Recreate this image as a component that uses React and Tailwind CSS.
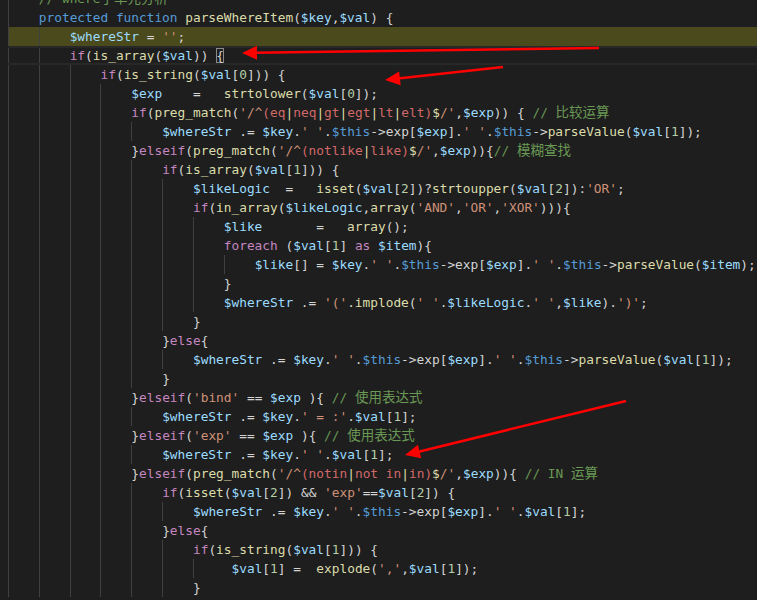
import React from "react";

// colours for each kind of token
const C = {
  kw: "text-[#569cd6]",
  ctl: "text-[#c586c0]",
  fn: "text-[#dcdcaa]",
  v: "text-[#9cdcfe]",
  s: "text-[#ce9178]",
  re: "text-[#d16969]",
  num: "text-[#b5cea8]",
  cm: "text-[#6a9955]",
  p: "text-[#d4d4d4]",
};

const LINES = [
  { ind: 1, src: "// where子单元分析" },
  { ind: 1, src: "protected function parseWhereItem($key,$val) {" },
  { ind: 2, src: "$whereStr = '';", hl: true },
  { ind: 2, src: "if(is_array($val)) {", cur: true },
  { ind: 3, src: "if(is_string($val[0])) {" },
  { ind: 4, src: "$exp    =   strtolower($val[0]);" },
  { ind: 4, src: "if(preg_match('/^(eq|neq|gt|egt|lt|elt)$/',$exp)) { // 比较运算" },
  { ind: 5, src: "$whereStr .= $key.' '.$this->exp[$exp].' '.$this->parseValue($val[1]);" },
  { ind: 4, src: "}elseif(preg_match('/^(notlike|like)$/',$exp)){// 模糊查找" },
  { ind: 5, src: "if(is_array($val[1])) {" },
  { ind: 6, src: "$likeLogic  =   isset($val[2])?strtoupper($val[2]):'OR';" },
  { ind: 6, src: "if(in_array($likeLogic,array('AND','OR','XOR'))){" },
  { ind: 7, src: "$like       =   array();" },
  { ind: 7, src: "foreach ($val[1] as $item){" },
  { ind: 8, src: "$like[] = $key.' '.$this->exp[$exp].' '.$this->parseValue($item);" },
  { ind: 7, src: "}" },
  { ind: 7, src: "$whereStr .= '('.implode(' '.$likeLogic.' ',$like).')';" },
  { ind: 6, src: "}" },
  { ind: 5, src: "}else{" },
  { ind: 6, src: "$whereStr .= $key.' '.$this->exp[$exp].' '.$this->parseValue($val[1]);" },
  { ind: 5, src: "}" },
  { ind: 4, src: "}elseif('bind' == $exp ){ // 使用表达式" },
  { ind: 5, src: "$whereStr .= $key.' = :'.$val[1];" },
  { ind: 4, src: "}elseif('exp' == $exp ){ // 使用表达式" },
  { ind: 5, src: "$whereStr .= $key.' '.$val[1];" },
  { ind: 4, src: "}elseif(preg_match('/^(notin|not in|in)$/',$exp)){ // IN 运算" },
  { ind: 5, src: "if(isset($val[2]) && 'exp'==$val[2]) {" },
  { ind: 6, src: "$whereStr .= $key.' '.$this->exp[$exp].' '.$val[1];" },
  { ind: 5, src: "}else{" },
  { ind: 6, src: "if(is_string($val[1])) {" },
  { ind: 7, src: " $val[1] =  explode(',',$val[1]);" },
  { ind: 6, src: "}" },
];

const TOKEN_RE =
  /(\/\/.*$)|('\/[^']*')|('[^']*')|(\$this\b)|(\$\w+)|\b(protected|function)\b|\b(if|elseif|else|foreach|as)\b|([A-Za-z_]\w*)(?=\()|(\d+)|([A-Za-z_]\w*)|(\s+)|(.)/g;

function Comment({ text }) {
  return text.split(/([\u4e00-\u9fff]+)/).map((part, i) =>
    /[\u4e00-\u9fff]/.test(part) ? (
      <span key={i} className="font-['Noto_Sans_CJK_SC',sans-serif] text-[13.5px] leading-none">
        {part}
      </span>
    ) : (
      <span key={i}>{part}</span>
    )
  );
}

function RegexStr({ text }) {
  const body = text.slice(2, -2);
  return (
    <>
      <span className={C.s}>'/</span>
      {body.split("").map((ch, i) => (
        <span key={i} className={ch === "|" || ch === "$" ? C.fn : ch === "^" ? C.s : C.re}>
          {ch}
        </span>
      ))}
      <span className={C.s}>/'</span>
    </>
  );
}

function Code({ src }) {
  const out = [];
  TOKEN_RE.lastIndex = 0;
  let m;
  let k = 0;
  while ((m = TOKEN_RE.exec(src))) {
    const t = m[0];
    k++;
    if (m[1]) out.push(<span key={k} className={C.cm}><Comment text={t} /></span>);
    else if (m[2]) out.push(<RegexStr key={k} text={t} />);
    else if (m[3]) out.push(<span key={k} className={C.s}>{t}</span>);
    else if (m[4]) out.push(<span key={k} className={C.kw}>{t}</span>);
    else if (m[5]) out.push(<span key={k} className={C.v}>{t}</span>);
    else if (m[6]) out.push(<span key={k} className={C.kw}>{t}</span>);
    else if (m[7]) out.push(<span key={k} className={C.ctl}>{t}</span>);
    else if (m[8]) out.push(<span key={k} className={C.fn}>{t}</span>);
    else if (m[9]) out.push(<span key={k} className={C.num}>{t}</span>);
    else out.push(<span key={k} className={C.p}>{t}</span>);
  }
  return out;
}

function Line({ line }) {
  const guides = Array.from({ length: line.ind });
  const src = line.cur ? line.src.slice(0, -1) : line.src;
  return (
    <div
      className={
        "flex h-[19px] shrink-0 items-center whitespace-pre " +
        (line.hl ? "bg-[#4b4a1c] " : "") +
        (line.cur ? "border-y-2 border-[#282828] " : "")
      }
    >
      {guides.map((_, i) => (
        <span key={i} className="self-stretch shrink-0 shadow-[inset_1px_0_0_#404040]">
          {"    "}
        </span>
      ))}
      <span className="leading-[19px]">
        <Code src={src} />
        {line.cur && (
          <span className="text-[#d4d4d4] shadow-[inset_0_0_0_1px_#8a8a8a]">{"{"}</span>
        )}
      </span>
    </div>
  );
}

function Arrow({ x1, y1, x2, y2 }) {
  const dx = x2 - x1;
  const dy = y2 - y1;
  const len = Math.hypot(dx, dy);
  const ux = dx / len;
  const uy = dy / len;
  const hl = 15;
  const hw = 7;
  const bx = x2 - ux * hl;
  const by = y2 - uy * hl;
  const pts = [
    [x2, y2],
    [bx - uy * hw, by + ux * hw],
    [bx + uy * hw, by - ux * hw],
  ]
    .map((p) => p.join(","))
    .join(" ");
  return (
    <g>
      <line x1={x1} y1={y1} x2={bx + ux * 2} y2={by + uy * 2} stroke="#ff0000" strokeWidth="2.5" />
      <polygon points={pts} fill="#ff0000" />
    </g>
  );
}

export default function App() {
  return (
    <div className="relative h-[600px] w-[757px] overflow-hidden bg-[#1e1e1e] font-['DejaVu_Sans_Mono',monospace] text-[12.8px] text-[#d4d4d4]">
      <div className="-mt-[11px] flex flex-col pl-2">
        {LINES.map((line, i) => (
          <Line key={i} line={line} />
        ))}
      </div>
      <svg className="pointer-events-none absolute inset-0" width="757" height="600">
        <Arrow x1={599} y1={48} x2={242} y2={53} />
        <Arrow x1={503} y1={67} x2={385} y2={80} />
        <Arrow x1={626} y1={401} x2={405} y2={455} />
      </svg>
    </div>
  );
}
